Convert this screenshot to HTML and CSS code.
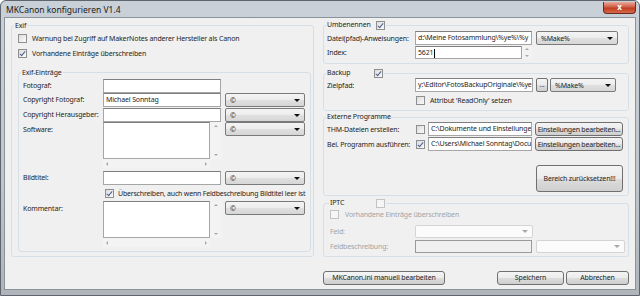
FILE: index.html
```html
<!DOCTYPE html>
<html lang="de">
<head>
    <meta charset="UTF-8">
    <title>MKCanon konfigurieren V1.4</title>
    <link rel="stylesheet" href="styles.css">
</head>
<body>

<div class="window">
    <div class="titlebar">
        <span class="title">MKCanon konfigurieren V1.4</span>
        <div class="close">x</div>
    </div>

    <div class="client">
        <!-- linke Seite: Exif -->
        <fieldset class="group exif">
            <legend>Exif</legend>
            <div class="exif-body">
                <label class="check first"><span class="cb"></span>Warnung bei Zugriff auf MakerNotes anderer Hersteller als Canon</label>
                <label class="check"><span class="cb checked"></span>Vorhandene Einträge überschreiben</label>

                <fieldset class="group entries">
                    <legend>Exif-Einträge</legend>
                    <div class="entries-grid">
                        <span class="lbl">Fotograf:</span>
                        <div class="tb"></div>
                        <span></span>

                        <span class="lbl">Copyright Fotograf:</span>
                        <div class="tb">Michael Sonntag</div>
                        <div class="combo"><span>©</span><i class="arrow"></i></div>

                        <span class="lbl">Copyright Herausgeber:</span>
                        <div class="tb"></div>
                        <div class="combo"><span>©</span><i class="arrow"></i></div>

                        <span class="lbl top">Software:</span>
                        <div class="memo">
                            <div class="memo-box"></div>
                            <div class="vscroll"><i class="ar-up"></i><i class="ar-down"></i></div>
                            <div class="hscroll"><i class="ar-left"></i><i class="ar-right"></i></div>
                        </div>
                        <div class="combo"><span>©</span><i class="arrow"></i></div>

                        <span class="lbl">Bildtitel:</span>
                        <div class="tb"></div>
                        <div class="combo"><span>©</span><i class="arrow"></i></div>

                        <span></span>
                        <label class="check wide"><span class="cb checked"></span>Überschreiben, auch wenn Feldbeschreibung Bildtitel leer ist</label>

                        <span class="lbl top">Kommentar:</span>
                        <div class="memo">
                            <div class="memo-box"></div>
                            <div class="vscroll"><i class="ar-up"></i><i class="ar-down"></i></div>
                            <div class="hscroll"><i class="ar-left"></i><i class="ar-right"></i></div>
                        </div>
                        <div class="combo"><span>©</span><i class="arrow"></i></div>
                    </div>
                </fieldset>
            </div>
        </fieldset>

        <!-- rechte Seite -->
        <div class="side">
            <fieldset class="group rename">
                <legend><span class="legend-text">Umbenennen</span><span class="cb checked"></span></legend>
                <div class="row">
                    <span class="rlbl">Datei(pfad)-Anweisungen:</span>
                    <div class="tb path">d:\Meine Fotosammlung\%ye%\%y</div>
                    <div class="combo make"><span>%Make%</span><i class="arrow"></i></div>
                </div>
                <div class="row index">
                    <span class="rlbl">Index:</span>
                    <div class="tb spin">5621<span class="caret"></span></div>
                    <div class="spin-btn"><i class="ar-up"></i><i class="ar-down"></i></div>
                </div>
            </fieldset>

            <fieldset class="group backup">
                <legend><span class="legend-text">Backup</span><span class="cb checked"></span></legend>
                <div class="row">
                    <span class="rlbl">Zielpfad:</span>
                    <div class="tb path">y:\Editor\FotosBackupOriginale\%ye</div>
                    <div class="btn dots">...</div>
                    <div class="combo make-small"><span>%Make%</span><i class="arrow"></i></div>
                </div>
                <div class="row readonly">
                    <span class="rlbl"></span>
                    <label class="check"><span class="cb"></span>Attribut 'ReadOnly' setzen</label>
                </div>
            </fieldset>

            <fieldset class="group extern">
                <legend><span class="legend-text">Externe Programme</span></legend>
                <div class="row">
                    <span class="rlbl">THM-Dateien erstellen:</span>
                    <span class="cb"></span>
                    <div class="tb prog">C:\Dokumente und Einstellungen</div>
                    <div class="btn settings">Einstellungen bearbeiten...</div>
                </div>
                <div class="row">
                    <span class="rlbl">Bel. Programm ausführen:</span>
                    <span class="cb checked"></span>
                    <div class="tb prog">C:\Users\Michael Sonntag\Docu</div>
                    <div class="btn settings">Einstellungen bearbeiten...</div>
                </div>
                <div class="reset-row">
                    <div class="btn reset">Bereich zurücksetzen!!!</div>
                </div>
            </fieldset>

            <fieldset class="group iptc disabled">
                <legend><span class="legend-text">IPTC</span><span class="cb"></span></legend>
                <label class="check"><span class="cb"></span>Vorhandene Einträge überschreiben</label>
                <div class="row feld">
                    <span class="rlbl">Feld:</span>
                    <div class="combo off"><span></span><i class="arrow"></i></div>
                </div>
                <div class="row feld">
                    <span class="rlbl">Feldbeschreibung:</span>
                    <div class="tb off"></div>
                    <div class="combo off small"><span></span><i class="arrow"></i></div>
                </div>
            </fieldset>
        </div>

        <div class="footer">
            <div class="btn ini">MKCanon.ini manuell bearbeiten</div>
            <div class="btn save">Speichern</div>
            <div class="btn cancel">Abbrechen</div>
        </div>
    </div>
</div>

</body>
</html>
```

FILE: styles.css
```css
body {
    margin: 0;
    font-family: "Noto Sans", "Open Sans", sans-serif;
    font-size: 7px;
    letter-spacing: -0.15px;
    color: #1e1e1e;
    background: #ffffff;
}

.window {
    width: 640px;
    height: 296px;
    box-sizing: border-box;
    border: 1px solid #5e656c;
    border-radius: 6px 6px 0 0;
    padding: 0 3px 5px 3px;
    background: linear-gradient(#c9d0d7, #bfc6cd 60%, #aeb4ba);
    display: flex;
    flex-direction: column;
}

.titlebar {
    height: 16px;
    display: flex;
    align-items: flex-start;
    justify-content: space-between;
}
.title {
    padding: 3px 0 0 2px;
    font-size: 8.5px;
    letter-spacing: 0;
    color: #1a1a1a;
}
.close {
    width: 33px;
    height: 12px;
    margin-top: 1px;
    box-sizing: border-box;
    border: 1px solid #6b2a20;
    border-top: none;
    border-radius: 0 0 4px 4px;
    background: linear-gradient(#e9a999, #d0604a 45%, #c13c22 55%, #d56a48);
    color: #ffffff;
    font-weight: bold;
    font-size: 8px;
    line-height: 10px;
    text-align: center;
}

.client {
    flex: 1;
    border: 1px solid #8b939b;
    background: #f0f0f0;
    padding: 3px 6px 0 6px;
    display: grid;
    grid-template-columns: 303px 306px;
    grid-template-rows: auto auto;
    column-gap: 9px;
    row-gap: 9px;
    align-items: start;
}

/* Gruppenrahmen */
.group {
    margin: 0;
    padding: 0;
    min-width: 0;
    border: 1px solid #d5dfe5;
    border-radius: 3px;
}
.group legend {
    margin-left: 2px;
    padding: 0 1px;
    line-height: 9px;
    height: 9px;
}

/* Checkbox */
.cb {
    display: inline-block;
    width: 9px;
    height: 9px;
    box-sizing: border-box;
    border: 1px solid #8e8f8f;
    background: linear-gradient(135deg, #dcdcdc, #fbfbfb);
    flex: none;
    position: relative;
}
.cb.checked::after {
    content: "";
    position: absolute;
    left: 2px;
    top: 0px;
    width: 2px;
    height: 5px;
    border: solid #4a5d92;
    border-width: 0 1px 1px 0;
    transform: rotate(40deg);
}
.check {
    display: flex;
    align-items: center;
    gap: 5px;
    height: 15px;
    white-space: nowrap;
}

/* Eingabefelder */
.tb {
    box-sizing: border-box;
    height: 14px;
    border: 1px solid #a6a6a6;
    border-top-color: #7f7f7f;
    background: #ffffff;
    padding: 0 2px;
    line-height: 12px;
    white-space: nowrap;
    overflow: hidden;
    flex: none;
}
.combo {
    box-sizing: border-box;
    height: 14px;
    border: 1px solid #7a7a7a;
    border-radius: 2px;
    background: linear-gradient(#f4f4f4, #ececec 50%, #e0e0e0 50%, #d6d6d6);
    padding: 0 4px;
    display: flex;
    align-items: center;
    justify-content: space-between;
    flex: none;
    white-space: nowrap;
}
.arrow {
    width: 0;
    height: 0;
    border-left: 3px solid transparent;
    border-right: 3px solid transparent;
    border-top: 3px solid #111111;
}
.btn {
    box-sizing: border-box;
    height: 14px;
    border: 1px solid #707070;
    border-radius: 3px;
    background: linear-gradient(#f4f4f4, #ebebeb 50%, #dddddd 50%, #cfcfcf);
    display: flex;
    align-items: center;
    justify-content: center;
    white-space: nowrap;
    flex: none;
}

/* Exif links */
.exif-body {
    padding: 1px 2px 4px 6px;
}
.entries {
    margin-top: 7px;
}
.entries-grid {
    padding: 2px 4px 4px 4px;
    display: grid;
    grid-template-columns: 80px 122px 80px;
    grid-template-rows: 14px 15px 14px 49px 18px 12px 46px;
    align-items: start;
}
.entries-grid .tb {
    width: 118px;
}
.lbl {
    line-height: 13px;
    white-space: nowrap;
}
.lbl.top {
    line-height: 16px;
}
.check.wide {
    grid-column: 2 / 4;
    height: 9px;
    gap: 4px;
    margin-left: 2px;
    letter-spacing: -0.2px;
}

.memo {
    display: grid;
    grid-template-columns: 107px 12px;
    grid-template-rows: 37px 9px;
}
.memo-box {
    border: 1px solid #a6a6a6;
    border-top-color: #7f7f7f;
    background: #ffffff;
}
.vscroll, .hscroll, .spin-btn {
    display: flex;
    justify-content: space-between;
    align-items: center;
    background: #f3f3f3;
}
.vscroll {
    flex-direction: column;
    padding: 3px 0;
}
.hscroll {
    padding: 0 3px;
}
.ar-up, .ar-down, .ar-left, .ar-right {
    width: 0;
    height: 0;
}
.ar-up {
    border-left: 2px solid transparent;
    border-right: 2px solid transparent;
    border-bottom: 2px solid #a8a8a8;
}
.ar-down {
    border-left: 2px solid transparent;
    border-right: 2px solid transparent;
    border-top: 2px solid #a8a8a8;
}
.ar-left {
    border-top: 2px solid transparent;
    border-bottom: 2px solid transparent;
    border-right: 2px solid #a8a8a8;
}
.ar-right {
    border-top: 2px solid transparent;
    border-bottom: 2px solid transparent;
    border-left: 2px solid #a8a8a8;
}

/* rechte Seite */
.side {
    margin-top: -1px;
    display: flex;
    flex-direction: column;
}
.side legend {
    display: flex;
    align-items: center;
    line-height: 10px;
    height: 10px;
    margin-left: -1px;
}
.legend-text {
    width: 49px;
    white-space: nowrap;
}
.side .group {
    padding: 0 9px 0 3px;
}
.row {
    display: flex;
    align-items: center;
    height: 14px;
}
.rlbl {
    width: 88px;
    flex: none;
    white-space: nowrap;
}

.side .rename {
    padding-top: 1px;
    padding-bottom: 4px;
}
.rename .path {
    width: 117px;
    margin-right: 4px;
}
.combo.make {
    width: 82px;
}
.row.index {
    margin-top: 1px;
    height: 13px;
}
.tb.spin {
    width: 107px;
    height: 13px;
}
.caret {
    display: inline-block;
    width: 1px;
    height: 9px;
    margin-left: 1px;
    background: #000000;
    vertical-align: middle;
}
.spin-btn {
    width: 10px;
    height: 13px;
    flex-direction: column;
    justify-content: space-around;
}

.side .backup {
    margin-top: 4px;
    padding-bottom: 5px;
}
.backup legend .legend-text {
    width: 47px;
}
.backup .path {
    width: 118px;
    margin-right: 3px;
}
.btn.dots {
    width: 12px;
    border-radius: 2px;
    margin-right: 2px;
    align-items: flex-end;
    padding-bottom: 2px;
    color: #555555;
}
.combo.make-small {
    width: 66px;
}
.row.readonly {
    margin-top: 3px;
    height: 10px;
}
.row.readonly .check {
    height: 10px;
    margin-left: 1px;
}

.side .extern {
    margin-top: 1px;
    padding-bottom: 3px;
}
.extern .row + .row {
    margin-top: 1px;
}
.extern .row .cb {
    margin-left: 1px;
    margin-right: 3px;
}
.tb.prog {
    width: 104px;
    margin-right: 3px;
}
.btn.settings {
    width: 88px;
    letter-spacing: -0.2px;
}
.reset-row {
    display: flex;
    margin-top: 14px;
    padding-left: 209px;
}
.btn.reset {
    width: 87px;
    height: 27px;
}

.side .iptc {
    margin-top: 2px;
    padding: 1px 3px 3px 6px;
}
.iptc legend .legend-text {
    width: 46px;
    color: #1e1e1e;
}
.disabled {
    color: #a3a3a3;
}
.iptc .check {
    height: 10px;
    gap: 6px;
}
.disabled .cb {
    border-color: #c3c3c3;
    background: #f6f6f6;
}
.iptc .rlbl {
    width: 85px;
}
.row.feld {
    height: 13px;
    margin-top: 6px;
}
.row.feld + .row.feld {
    margin-top: 2px;
}
.combo.off {
    width: 118px;
    height: 13px;
    border-color: #d4d4d4;
    background: #fbfbfb;
}
.combo.off .arrow {
    border-top-color: #a8a8a8;
}
.tb.off {
    width: 117px;
    height: 13px;
    background: #f0f0f0;
    border-color: #9a9a9a;
    margin-right: 4px;
}
.combo.off.small {
    width: 89px;
}

.footer {
    grid-column: 2;
    display: flex;
}
.btn.ini {
    width: 122px;
}
.btn.save {
    width: 67px;
    margin-left: auto;
    margin-right: 2px;
}
.btn.cancel {
    width: 63px;
}
```
